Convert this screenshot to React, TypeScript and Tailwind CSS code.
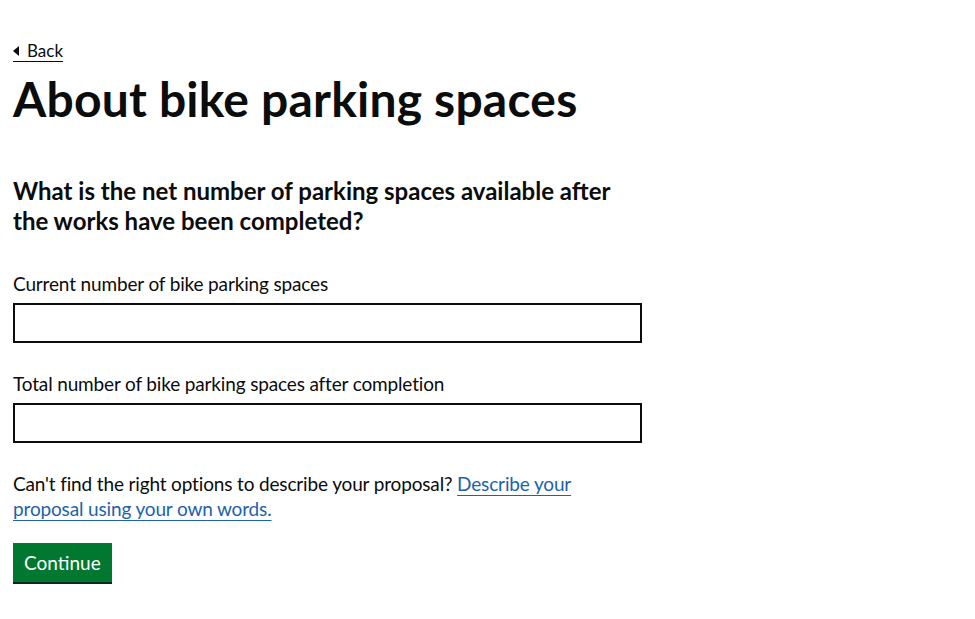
export default function App() {
  return (
    <div className="min-h-screen bg-white px-[13px] pt-[38px] text-[#0b0c0c] [font-family:Lato,'Liberation_Sans',sans-serif]">
      <a href="#" className="inline-flex items-center gap-[8px] border-b border-[#0b0c0c] text-[17px] leading-[20px] text-[#0b0c0c]">
        <span className="h-0 w-0 border-y-[5px] border-r-[6px] border-y-transparent border-r-[#0b0c0c]" />
        Back
      </a>
      <h1 className="mt-[12px] text-[48px] font-bold leading-[50px] tracking-[0.2px]">About bike parking spaces</h1>
      <h2 className="mt-[52px] w-[620px] text-[24px] font-bold leading-[30px]">
        What is the net number of parking spaces available after the works have been completed?
      </h2>
      <div className="mt-[35px]">
        <label className="block text-[19px] leading-[25px] tracking-[-0.15px]">Current number of bike parking spaces</label>
        <input type="text" className="mt-[7px] block h-[40px] w-[629px] border-2 border-[#0b0c0c] px-[5px] outline-none" />
      </div>
      <div className="mt-[28px]">
        <label className="block text-[19px] leading-[25px] tracking-[-0.15px]">Total number of bike parking spaces after completion</label>
        <input type="text" className="mt-[7px] block h-[40px] w-[629px] border-2 border-[#0b0c0c] px-[5px] outline-none" />
      </div>
      <p className="mt-[28px] w-[570px] text-[19px] leading-[25px] tracking-[-0.15px]">
        Can't find the right options to describe your proposal?{" "}
        <a href="#" className="text-[#1d62ab] underline decoration-1 underline-offset-[4px]">
          Describe your proposal using your own words.
        </a>
      </p>
      <button className="mt-[22px] h-[39px] bg-[#00782f] px-[11px] text-[19px] leading-[25px] text-white shadow-[0_2px_0_#002d18]">
        Continue
      </button>
    </div>
  );
}
